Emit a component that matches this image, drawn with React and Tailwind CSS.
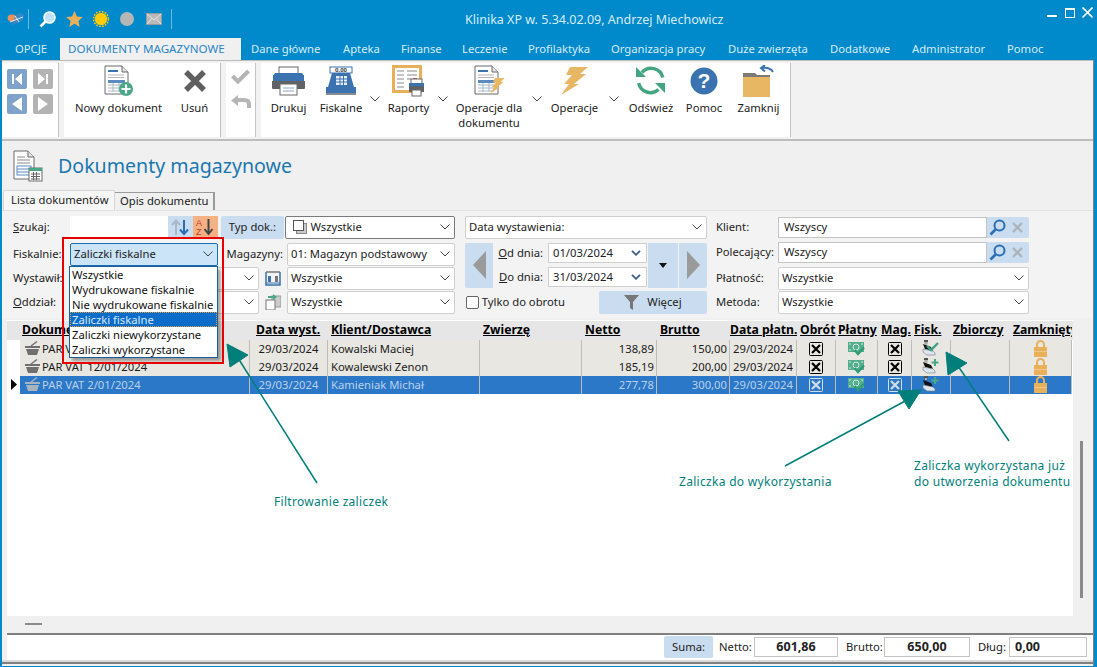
import React from 'react'

const GRID = 'grid grid-cols-[13px_230px_78px_152px_102px_75px_73px_67px_39px_42px_34px_39px_59px_62px]'

function Chevron({ className = '' }) {
  return (
    <svg width="10" height="6" viewBox="0 0 10 6" className={className}>
      <polyline points="0.5,0.5 5,5 9.5,0.5" fill="none" stroke="#444" strokeWidth="1" />
    </svg>
  )
}

function DateChevron() {
  return (
    <svg width="10" height="6" viewBox="0 0 10 6">
      <polyline points="1,0.8 5,4.8 9,0.8" fill="none" stroke="#3b5f8a" strokeWidth="1.8" />
    </svg>
  )
}

function Select({ value, width = 'flex-1', border = 'border-[#cfcfcf]', bg = 'bg-white' }) {
  return (
    <div className={`${width} ${border} ${bg} h-full border rounded-[2px] flex items-center pl-[3px] pr-[4px] justify-between overflow-hidden whitespace-nowrap`}>
      <span className="flex items-center gap-[3px]">{value}</span>
      <Chevron />
    </div>
  )
}

function TitleIcons() {
  return (
    <div className="flex items-center h-[38px] pl-[7px]">
      <svg width="18" height="14" viewBox="0 0 18 14">
        <ellipse cx="5" cy="6" rx="4.5" ry="3.5" fill="#e8935a" />
        <path d="M5 13 L8 4 L13 1 L17 3 L16 8 L11 11 Z" fill="#4a86c4" opacity="0.8" />
        <path d="M3 10 L16 5 M8 4 L12 10" stroke="#fff" strokeWidth="0.8" />
      </svg>
      <div className="w-px h-[20px] bg-[#6fb6dc] ml-[3px] mr-[10px]" />
      <svg width="17" height="17" viewBox="0 0 17 17">
        <circle cx="10.5" cy="6.5" r="5.5" fill="#bfe3fb" stroke="#fff" strokeWidth="1.6" />
        <line x1="6.5" y1="10.5" x2="1.5" y2="15.5" stroke="#fff" strokeWidth="2.6" />
      </svg>
      <svg width="17" height="16" viewBox="0 0 24 23" className="ml-[10px]">
        <polygon points="12,0 15.5,8 24,8.8 17.6,14.4 19.5,23 12,18.5 4.5,23 6.4,14.4 0,8.8 8.5,8" fill="#e8b05a" />
      </svg>
      <svg width="16" height="16" viewBox="0 0 16 16" className="ml-[10px]">
        <circle cx="8" cy="8" r="6.2" fill="#ffcb05" />
        <circle cx="8" cy="8" r="7.5" fill="none" stroke="#ffcb05" strokeWidth="1.6" strokeDasharray="1.6 1.4" />
      </svg>
      <div className="w-[14px] h-[14px] rounded-full bg-[#b6b6b6] ml-[11px]" />
      <svg width="16" height="12" viewBox="0 0 16 12" className="ml-[12px]">
        <rect x="0.5" y="0.5" width="15" height="11" fill="#b9b9b9" stroke="#9a9a9a" />
        <path d="M1 1 L8 7 L15 1 M1 11 L6 5.5 M15 11 L10 5.5" fill="none" stroke="#e4e4e4" strokeWidth="1" />
      </svg>
      <div className="w-px h-[20px] bg-[#6fb6dc] ml-[9px]" />
    </div>
  )
}

function WindowButtons() {
  return (
    <svg width="46" height="12" viewBox="0 0 46 12" className="absolute left-[1047px] top-[7px]">
      <rect x="0" y="8" width="10" height="2" fill="#fff" />
      <rect x="18.5" y="1.5" width="9" height="9" fill="none" stroke="#fff" strokeWidth="1" />
      <rect x="18" y="1" width="10" height="2" fill="#fff" />
      <path d="M35.5 0.5 L45.5 10.5 M45.5 0.5 L35.5 10.5" stroke="#fff" strokeWidth="1.7" />
    </svg>
  )
}

function MenuTabs() {
  const items = [
    ['Dane główne', 'w-[70px] ml-[10px]'],
    ['Apteka', 'w-[37px] ml-[22px]'],
    ['Finanse', 'w-[40px] ml-[21px]'],
    ['Leczenie', 'w-[45px] ml-[21px]'],
    ['Profilaktyka', 'w-[62px] ml-[21px]'],
    ['Organizacja pracy', 'w-[94px] ml-[21px]'],
    ['Duże zwierzęta', 'w-[77px] ml-[23px]'],
    ['Dodatkowe', 'w-[60px] ml-[25px]'],
    ['Administrator', 'w-[72px] ml-[22px]'],
    ['Pomoc', 'w-[37px] ml-[23px]'],
  ]
  return (
    <div className="flex items-end h-[22px] text-[#d6edf9] whitespace-nowrap">
      <div className="w-[60px] pl-[15px] h-full flex items-center">OPCJE</div>
      <div className="w-[181px] h-full bg-[#f0f0f0] text-[#2a86c8] text-[11.6px] flex items-center pl-[8px]">DOKUMENTY MAGAZYNOWE</div>
      {items.map(([t, m]) => (
        <div key={t} className={`${m} h-full flex items-center`}>{t}</div>
      ))}
    </div>
  )
}

function RibbonBtn({ width, icon, label }) {
  return (
    <div className={`${width} flex flex-col items-center shrink-0 whitespace-nowrap text-center leading-[15px] text-[#1b1b1b]`}>
      <div className="h-[37px] flex items-center justify-center">{icon}</div>
      <div>{label}</div>
    </div>
  )
}

function RibbonChev({ width }) {
  return (
    <div className={`${width} shrink-0 flex justify-center pt-[33px]`}>
      <Chevron />
    </div>
  )
}

function DocBase({ children }) {
  return (
    <svg width="30" height="32" viewBox="0 0 30 32">
      <path d="M1 1 H18 L24 7 V29 H1 Z" fill="#fff" stroke="#6a6a6a" strokeWidth="1" />
      <path d="M18 1 V7 H24" fill="#e4e4e4" stroke="#6a6a6a" strokeWidth="1" />
      <rect x="4" y="5" width="10" height="2" fill="#3b72b0" />
      <path d="M4 10 H20 M4 12.5 H20" stroke="#b5b5b5" strokeWidth="1" />
      <rect x="4" y="15" width="17" height="3" fill="#5b8bc0" />
      <path d="M4 20 H20 M4 23 H20 M4 26 H20 M9 18 V27 M15 18 V27" stroke="#aab8c8" strokeWidth="1" />
      {children}
    </svg>
  )
}

function Ribbon() {
  const printer = (
    <svg width="33" height="30" viewBox="0 0 33 30">
      <rect x="7" y="1" width="19" height="8" fill="#fff" stroke="#666" />
      <path d="M3 7 H30 L32 10 H1 Z" fill="#3b72b0" />
      <rect x="1" y="9" width="31" height="11" fill="#3b72b0" />
      <path d="M0 15 H33 V22 Q33 23 32 23 H1 Q0 23 0 22 Z" fill="#5f6368" />
      <rect x="8" y="18" width="17" height="11" fill="#fff" stroke="#666" />
      <path d="M11 22 H22 M11 25 H22" stroke="#8aa8c8" />
    </svg>
  )
  const register = (
    <svg width="30" height="30" viewBox="0 0 30 30">
      <rect x="4" y="1" width="22" height="6" fill="#fff" stroke="#3b72b0" />
      <text x="15" y="6.2" textAnchor="middle" fontSize="6" fontWeight="700" fill="#444">0,00</text>
      <path d="M6 7 H24 L28 21 H2 Z" fill="#3b72b0" />
      <rect x="10" y="10" width="11" height="9" fill="#e9eef5" />
      <path d="M10 13 H21 M10 16 H21 M14 10 V19 M17.5 10 V19" stroke="#3b72b0" />
      <rect x="0" y="21" width="30" height="6" fill="#3b72b0" />
      <rect x="0" y="27" width="30" height="2" fill="#8b8b8b" />
    </svg>
  )
  const reports = (
    <svg width="33" height="33" viewBox="0 0 33 33">
      <rect x="1.5" y="1.5" width="27" height="25" fill="#fff" stroke="#e8b05a" strokeWidth="3" />
      <path d="M5 6 H12 M15 6 H25 M5 10 H12 M15 10 H25 M5 14 H12 M15 14 H19 M5 18 H12 M5 22 H12" stroke="#8a8a8a" />
      <rect x="21" y="13" width="4" height="2" fill="#d9534f" />
      <rect x="17" y="18" width="15" height="9" fill="#5f6368" />
      <rect x="19" y="14" width="11" height="5" fill="#fff" stroke="#666" />
      <rect x="17" y="18" width="15" height="3" fill="#3b72b0" />
      <rect x="20" y="25" width="9" height="6" fill="#fff" stroke="#666" />
    </svg>
  )
  const bolt = (w, h) => (
    <svg width={w} height={h} viewBox="0 0 27 28">
      <path d="M9 0 H27 L19 7 H25 L13 17 H18 L0 28 L8 17 H3 L11 8 H5 Z" fill="#e8b764" />
    </svg>
  )
  const refresh = (
    <svg width="32" height="32" viewBox="0 0 32 32">
      <path d="M7 7.5 A12 12 0 0 1 27.8 12.5" fill="none" stroke="#45a582" strokeWidth="3.5" />
      <path d="M3.7 18 A12 12 0 0 0 23.5 24.5" fill="none" stroke="#45a582" strokeWidth="3.5" />
      <polygon points="1,2 1,12 11,12" fill="#45a582" />
      <polygon points="30,28 30,18 20,18" fill="#45a582" />
    </svg>
  )
  const help = (
    <svg width="28" height="28" viewBox="0 0 28 28">
      <circle cx="14" cy="14" r="13.5" fill="#3b72b0" />
      <text x="14" y="21" textAnchor="middle" fontSize="21" fontWeight="700" fill="#fff" fontFamily="Liberation Sans">?</text>
    </svg>
  )
  const folder = (
    <svg width="31" height="32" viewBox="0 0 31 32">
      <path d="M0 8 H12 L14 10 H27 V12 H0 Z" fill="#7a7a7a" />
      <rect x="0" y="12" width="27" height="20" fill="#e8b764" />
      <path d="M30 7 Q27 2 19 3 M22 0 L18 3 L22 6.5" fill="none" stroke="#3b72b0" strokeWidth="2" />
    </svg>
  )

  return (
    <div className="h-[81px] border-t border-b-2 border-[#bdbdbd] bg-[#f2f2f2] pt-[2px] pb-[2px] flex shrink-0">
      <div className="w-[57px] bg-white border-r border-[#c4c4c4] grid grid-cols-[20px_20px] grid-rows-[20px_20px] gap-x-[6px] gap-y-[5px] pl-[5px] pt-[6px] content-start">
        <div className="bg-[#7ea2c9] flex items-center justify-center rounded-[2px]">
          <svg width="12" height="12" viewBox="0 0 12 12"><path d="M1 1 H3 V11 H1 Z M11 0 V12 L4 6 Z" fill="#fff" /></svg>
        </div>
        <div className="bg-[#b3b3b3] flex items-center justify-center rounded-[2px]">
          <svg width="12" height="12" viewBox="0 0 12 12"><path d="M9 1 H11 V11 H9 Z M1 0 V12 L8 6 Z" fill="#fff" /></svg>
        </div>
        <div className="bg-[#7ea2c9] flex items-center justify-center rounded-[2px]">
          <svg width="12" height="14" viewBox="0 0 12 14"><path d="M11 0 V14 L1 7 Z" fill="#fff" /></svg>
        </div>
        <div className="bg-[#b3b3b3] flex items-center justify-center rounded-[2px]">
          <svg width="12" height="14" viewBox="0 0 12 14"><path d="M1 0 V14 L11 7 Z" fill="#fff" /></svg>
        </div>
      </div>
      <div className="w-[157px] ml-[5px] bg-white border-r border-[#c4c4c4] flex pl-[10px]">
        <RibbonBtn
          width="w-[89px]"
          icon={
            <DocBase>
              <circle cx="22" cy="24" r="7" fill="#4aa886" />
              <path d="M22 19.5 V28.5 M17.5 24 H26.5" stroke="#fff" strokeWidth="2.2" />
            </DocBase>
          }
          label="Nowy dokument"
        />
        <RibbonBtn
          width="w-[27px] ml-[18px]"
          icon={
            <svg width="22" height="22" viewBox="0 0 22 22">
              <path d="M2 2 L20 20 M20 2 L2 20" stroke="#5f5f5f" strokeWidth="5.4" />
            </svg>
          }
          label="Usuń"
        />
      </div>
      <div className="w-[30px] ml-[5px] bg-white border-r border-[#c4c4c4] flex flex-col items-center pt-[6px] gap-[11px]">
        <svg width="19" height="15" viewBox="0 0 19 15">
          <path d="M1.5 7 L7 12.5 L17.5 2" fill="none" stroke="#b5b5b5" strokeWidth="4" />
        </svg>
        <svg width="20" height="14" viewBox="0 0 20 14">
          <path d="M18 13 V9 Q18 5 13 5 H5" fill="none" stroke="#b5b5b5" strokeWidth="4" />
          <polygon points="7,0 7,11 0,5.5" fill="#b5b5b5" />
        </svg>
      </div>
      <div className="w-[530px] ml-[5px] bg-white border-r border-[#c4c4c4] flex pl-[10px]">
        <RibbonBtn width="w-[35px]" icon={printer} label="Drukuj" />
        <RibbonBtn width="w-[42px] ml-[14px]" icon={register} label="Fiskalne" />
        <RibbonChev width="w-[26px]" />
        <RibbonBtn width="w-[41px]" icon={reports} label="Raporty" />
        <RibbonChev width="w-[27px]" />
        <RibbonBtn
          width="w-[66px]"
          icon={
            <DocBase>
              <g transform="translate(16,13) scale(0.55)">
                <path d="M9 0 H27 L19 7 H25 L13 17 H18 L0 28 L8 17 H3 L11 8 H5 Z" fill="#e8b764" />
              </g>
            </DocBase>
          }
          label={<>Operacje dla<br />dokumentu</>}
        />
        <RibbonChev width="w-[29px]" />
        <RibbonBtn width="w-[47px]" icon={bolt(27, 28)} label="Operacje" />
        <RibbonChev width="w-[31px]" />
        <RibbonBtn width="w-[44px]" icon={refresh} label="Odśwież" />
        <RibbonBtn width="w-[38px] ml-[12px]" icon={help} label="Pomoc" />
        <RibbonBtn width="w-[43px] ml-[14px]" icon={folder} label="Zamknij" />
      </div>
    </div>
  )
}

function TitleSection() {
  return (
    <div className="h-[49px] shrink-0 flex items-center pl-[11px] pt-[2px]">
      <svg width="30" height="32" viewBox="0 0 30 32">
        <path d="M1 1 H15 L21 7 V29 H1 Z" fill="#fff" stroke="#6a6a6a" />
        <path d="M15 1 V7 H21" fill="#e4e4e4" stroke="#6a6a6a" />
        <path d="M4 7 H12 M4 10 H17 M4 13 H17" stroke="#8a8a8a" />
        <rect x="4" y="16" width="14" height="9" fill="#fff" stroke="#5b8bc0" />
        <path d="M4 19 H18 M4 22 H18" stroke="#5b8bc0" />
        <rect x="16" y="18" width="13" height="13" fill="#fff" stroke="#6a6a6a" />
        <rect x="16" y="18" width="13" height="3" fill="#4aa886" />
        <path d="M18 24 H27 M18 26.5 H27 M18 29 H27 M20.5 22 V30 M23.5 22 V30" stroke="#666" />
      </svg>
      <div className="ml-[15px] text-[19.6px] leading-[26px] text-[#1b78b0] whitespace-nowrap">Dokumenty magazynowe</div>
    </div>
  )
}

function PageTabs() {
  return (
    <div className="h-[20px] shrink-0 flex items-end pl-[1px] whitespace-nowrap">
      <div className="w-[112px] h-[20px] bg-[#f7f7f7] border-t border-x border-[#d5d5d5] flex items-center pl-[7px] rounded-t-[2px]">Lista dokumentów</div>
      <div className="w-[100px] h-[18px] bg-[#f0f0f0] border-t border-r-2 border-[#9a9a9a] flex items-center pl-[5px]">Opis dokumentu</div>
    </div>
  )
}

function Filters() {
  const copyIcon = (
    <svg width="14" height="14" viewBox="0 0 14 14" className="ml-[4px]">
      <rect x="3.5" y="3.5" width="10" height="10" fill="#c9c9c9" stroke="#8a8a8a" />
      <rect x="0.5" y="0.5" width="10" height="10" fill="#fff" stroke="#555" />
    </svg>
  )
  return (
    <div className="h-[108px] shrink-0 bg-[#f3f3f3] border-t border-[#e2e2e2] pt-[5px] pl-[12px] flex">
      {/* lewa kolumna */}
      <div className="w-[441px] flex flex-col">
        <div className="h-[23px] mb-[4px] flex items-center">
          <div className="w-[57px] -ml-px"><u>S</u>zukaj:</div>
          <div className="w-[98px] h-full bg-white" />
          <div className="w-[25px] h-full bg-[#c9dcf0] flex items-center justify-center">
            <svg width="18" height="17" viewBox="0 0 18 17">
              <path d="M5 16 V3 M1 6 L5 1.5 L9 6" fill="none" stroke="#a8b8c8" strokeWidth="2" />
              <path d="M13 1 V14 M9 10.5 L13 15 L17 10.5" fill="none" stroke="#2a6fb5" strokeWidth="2" />
            </svg>
          </div>
          <div className="w-[25px] h-full bg-[#f4b183] flex items-center justify-center">
            <svg width="18" height="18" viewBox="0 0 18 18">
              <text x="0" y="8" fontSize="9" fill="#c0392b" fontFamily="Liberation Sans">A</text>
              <text x="0" y="17" fontSize="9" fill="#c0392b" fontFamily="Liberation Sans">Z</text>
              <path d="M12.5 1 V15 M8.5 11 L12.5 16 L16.5 11" fill="none" stroke="#444" strokeWidth="2" />
            </svg>
          </div>
          <div className="w-[64px] h-full ml-[3px] bg-[#c9dcf0] rounded-[2px] flex items-center justify-center text-[#222]">Typ dok.:</div>
          <div className="w-[170px] h-full ml-px">
            <Select width="w-full" border="border-[#7a7a7a]" value={<>{copyIcon}Wszystkie</>} />
          </div>
        </div>
        <div className="h-[23px] mb-px flex items-center">
          <div className="w-[57px] -ml-px">Fiskalnie:</div>
          <Select width="w-[148px]" border="border-[#1a6fb5]" bg="bg-[#cbe4f7]" value="Zaliczki fiskalne" />
          <div className="w-[65px] text-right whitespace-nowrap">Magazyny:</div>
          <div className="w-[168px] h-full ml-[4px]">
            <Select width="w-full" value="01: Magazyn podstawowy" />
          </div>
        </div>
        <div className="h-[23px] mb-px flex items-center">
          <div className="w-[57px] -ml-px whitespace-nowrap">Wystawił:</div>
          <Select width="w-[189px]" value="" />
          <div className="w-[28px] flex justify-center">
            <svg width="16" height="15" viewBox="0 0 16 15">
              <path d="M1 1 V14 H15 V1" fill="none" stroke="#3b72b0" strokeWidth="1.5" />
              <path d="M1 1 H15" stroke="#777" strokeWidth="1.5" />
              <rect x="3" y="5" width="3" height="6" fill="#3b72b0" />
              <rect x="10" y="5" width="3" height="6" fill="#777" />
              <path d="M1 12 H15" stroke="#3b72b0" />
            </svg>
          </div>
          <div className="w-[168px] h-full">
            <Select width="w-full" value="Wszystkie" />
          </div>
        </div>
        <div className="h-[23px] flex items-center">
          <div className="w-[57px] -ml-px"><u>O</u>ddział:</div>
          <Select width="w-[189px]" value="" />
          <div className="w-[28px] flex justify-center">
            <svg width="16" height="16" viewBox="0 0 16 16">
              <rect x="7" y="2" width="9" height="11" fill="#ccc" stroke="#999" />
              <rect x="1" y="6" width="9" height="10" fill="#fff" stroke="#777" />
              <path d="M3 2 H8 V0 L12 3 L8 6 V4 H3 Z" fill="#4aa886" />
            </svg>
          </div>
          <div className="w-[168px] h-full">
            <Select width="w-full" value="Wszystkie" />
          </div>
        </div>
      </div>

      {/* daty */}
      <div className="w-[242px] ml-[10px] flex flex-col">
        <div className="h-[23px] mb-[4px]">
          <Select width="w-full" value="Data wystawienia:" />
        </div>
        <div className="h-[45px] mb-[3px] flex">
          <div className="w-[28px] bg-[#c9dcf0] rounded-l-[2px] flex items-center justify-center">
            <svg width="13" height="28" viewBox="0 0 13 28"><polygon points="13,0 13,28 0,14" fill="#9a9a9a" /></svg>
          </div>
          <div className="flex-1 flex flex-col gap-[4px]">
            <div className="h-[20px] flex items-center">
              <div className="w-[55px] text-right pr-[5px] whitespace-nowrap"><u>O</u>d dnia:</div>
              <div className="w-[99px] h-full bg-white border border-[#cfcfcf] flex items-center justify-between pl-[4px] pr-[5px]">
                01/03/2024
                <DateChevron />
              </div>
            </div>
            <div className="h-[20px] flex items-center">
              <div className="w-[55px] text-right pr-[5px] whitespace-nowrap"><u>D</u>o dnia:</div>
              <div className="w-[99px] h-full bg-white border border-[#cfcfcf] flex items-center justify-between pl-[4px] pr-[5px]">
                31/03/2024
                <DateChevron />
              </div>
            </div>
          </div>
          <div className="w-[30px] bg-[#c9dcf0] flex items-center justify-center">
            <svg width="8" height="5" viewBox="0 0 8 5"><polygon points="0,0 8,0 4,5" fill="#111" /></svg>
          </div>
          <div className="w-[28px] ml-px bg-[#c9dcf0] rounded-r-[2px] flex items-center justify-center">
            <svg width="13" height="28" viewBox="0 0 13 28"><polygon points="0,0 0,28 13,14" fill="#9a9a9a" /></svg>
          </div>
        </div>
        <div className="h-[23px] flex items-center">
          <div className="w-[13px] h-[13px] ml-px border border-[#666] rounded-[2px] bg-white" />
          <div className="ml-[3px] w-[119px] whitespace-nowrap">Tylko do obrotu</div>
          <div className="w-[110px] h-full rounded-[2px] bg-[#c9dcf0] flex items-center justify-center gap-[8px]">
            <svg width="15" height="15" viewBox="0 0 15 15">
              <path d="M0 0 H15 L9 7 V15 L6 13 V7 Z" fill="#777" />
            </svg>
            Więcej
          </div>
        </div>
      </div>

      {/* klient */}
      <div className="w-[313px] ml-[9px] flex flex-col">
        <div className="h-[21px] mt-px mb-[4px] flex items-center">
          <div className="w-[62px]">Klient:</div>
          <div className="w-[209px] h-full bg-white border border-[#c4c4c4] flex items-center pl-[5px]">Wszyscy</div>
          <SearchBtns />
        </div>
        <div className="h-[21px] mb-[4px] flex items-center">
          <div className="w-[62px] whitespace-nowrap">Polecający:</div>
          <div className="w-[209px] h-full bg-white border border-[#c4c4c4] flex items-center pl-[5px]">Wszyscy</div>
          <SearchBtns />
        </div>
        <div className="h-[23px] mb-px flex items-center">
          <div className="w-[62px]">Płatność:</div>
          <Select width="w-[251px]" value="Wszystkie" />
        </div>
        <div className="h-[23px] flex items-center">
          <div className="w-[62px]">Metoda:</div>
          <Select width="w-[251px]" value="Wszystkie" />
        </div>
      </div>
    </div>
  )
}

function SearchBtns() {
  return (
    <div className="w-[42px] h-full bg-[#c9dcf0] rounded-r-[2px] flex items-center pl-[2px] gap-[6px]">
      <svg width="17" height="17" viewBox="0 0 17 17">
        <circle cx="10.5" cy="6.5" r="5" fill="none" stroke="#2a6fb5" strokeWidth="2" />
        <line x1="6.5" y1="10.5" x2="1.5" y2="15.5" stroke="#2a6fb5" strokeWidth="2.6" />
      </svg>
      <svg width="11" height="11" viewBox="0 0 11 11">
        <path d="M1 1 L10 10 M10 1 L1 10" stroke="#aeb4ba" strokeWidth="2.4" />
      </svg>
    </div>
  )
}

function XBox({ dim }) {
  const c = dim ? '#d5dde8' : '#000'
  return (
    <svg width="14" height="14" viewBox="0 0 14 14">
      <rect x="0.5" y="0.5" width="13" height="13" rx="1" fill="none" stroke={c} />
      <path d="M3 3 L11 11 M11 3 L3 11" stroke={c} strokeWidth="2.2" />
    </svg>
  )
}

function Money() {
  return (
    <svg width="17" height="15" viewBox="0 0 17 15">
      <rect x="0" y="1" width="16" height="10" fill="#52ae8c" />
      <circle cx="8" cy="6" r="3" fill="none" stroke="#d5ece2" />
      <path d="M1 3 H3 M13 3 H15 M1 9 H3" stroke="#d5ece2" />
      <path d="M6.5 9 L10 13 L16 6.5" fill="none" stroke="#2e9a78" strokeWidth="2.2" />
    </svg>
  )
}

function FiskIcon({ mark }) {
  return (
    <svg width="18" height="17" viewBox="0 0 18 17">
      <rect x="2" y="0" width="4" height="2" fill="#555" />
      <path d="M1 4 L9 7 L11 11 L3 9 Z" fill="#111" />
      <rect x="3" y="2" width="2" height="2" fill="#fff" stroke="#444" strokeWidth="0.5" />
      <path d="M1 9 L11 11 L13 13 V15 L5 15 L1 12 Z" fill="#dbe6f3" stroke="#777" strokeWidth="0.6" />
      {mark === 'check' && <path d="M5 6 L9 10 L16 3" fill="none" stroke="#3fa283" strokeWidth="2.4" />}
      {mark === 'plus' && <path d="M13 1 V8 M9.5 4.5 H16.5" stroke="#4aa886" strokeWidth="2" />}
    </svg>
  )
}

function Lock() {
  return (
    <svg width="13" height="17" viewBox="0 0 13 17">
      <path d="M3 8 V4.5 A3.5 3.5 0 0 1 10 4.5 V8" fill="none" stroke="#e8b05a" strokeWidth="2" />
      <rect x="0" y="7" width="13" height="10" fill="#e8b05a" />
      <path d="M0 11.5 H13" stroke="#f0cd94" strokeWidth="0.8" />
    </svg>
  )
}

function Basket({ dim }) {
  const c = dim ? '#aab4bf' : '#6f6f6f'
  return (
    <svg width="15" height="15" viewBox="0 0 15 15">
      <path d="M6 5 L12 0.5" stroke={c} strokeWidth="1.4" />
      <rect x="0" y="5" width="15" height="2" fill={c} />
      <path d="M1 8 H14 L12 14 H3 Z" fill={c} />
    </svg>
  )
}

const rows = [
  { doc: 'PAR VAT 13/01/2024', date: '29/03/2024', client: 'Kowalski Maciej', net: '138,89', gross: '150,00', mark: 'check' },
  { doc: 'PAR VAT 12/01/2024', date: '29/03/2024', client: 'Kowalewski Zenon', net: '185,19', gross: '200,00', mark: 'plus' },
  { doc: 'PAR VAT 2/01/2024', date: '29/03/2024', client: 'Kamieniak Michał', net: '277,78', gross: '300,00', mark: 'plus', selected: true },
]

function GridTable() {
  const heads = [
    ['', 'pl-0'],
    ['Dokument', 'pl-[2px]'],
    ['Data wyst.', 'pl-[6px]'],
    ['Klient/Dostawca', 'pl-[3px]'],
    ['Zwierzę', 'pl-[3px]'],
    ['Netto', 'pl-[3px]'],
    ['Brutto', 'pl-[3px]'],
    ['Data płatn.', 'pl-0'],
    ['Obrót', 'pl-[3px]'],
    ['Płatny', 'pl-[2px]'],
    ['Mag.', 'pl-[3px]'],
    ['Fisk.', 'pl-[2px]'],
    ['Zbiorczy', 'pl-[2px]'],
    ['Zamknięty', 'pl-[3px]'],
  ]
  return (
    <div className="w-[1066px] h-full bg-white">
      <div className={`${GRID} h-[19px] bg-[#e6e6e6] font-bold text-black text-[12.2px] mt-px`}>
        {heads.map(([t, p], i) => (
          <div key={i} className={`${p} underline whitespace-nowrap overflow-hidden leading-[18px]`}>{t}</div>
        ))}
      </div>
      {rows.map((r) => {
        const sep = 'border-r border-[#bdbdbd] h-full flex items-center overflow-hidden whitespace-nowrap'
        return (
          <div key={r.doc} className={`${GRID} h-[18px]`}>
            <div className="bg-white flex items-center justify-center">
              {r.selected && (
                <svg width="6" height="11" viewBox="0 0 6 11"><polygon points="0,0 6,5.5 0,11" fill="#000" /></svg>
              )}
            </div>
            {[
              <div className="flex items-center gap-[2px] pl-[5px]"><Basket dim={r.selected} />{r.doc}</div>,
              <div className="w-full text-center">{r.date}</div>,
              <div className="pl-[3px]">{r.client}</div>,
              '',
              <div className="w-full text-right pr-[2px]">{r.net}</div>,
              <div className="w-full text-right pr-[2px]">{r.gross}</div>,
              <div className="w-full text-center">{r.date}</div>,
              <div className="w-full flex justify-center"><XBox dim={r.selected} /></div>,
              <div className="w-full flex justify-center"><Money /></div>,
              <div className="w-full flex justify-center"><XBox dim={r.selected} /></div>,
              <div className="w-full flex justify-center"><FiskIcon mark={r.mark} /></div>,
              '',
              <div className="w-full flex justify-center"><Lock /></div>,
            ].map((c, i) => (
              <div
                key={i}
                className={`${sep} ${r.selected ? 'bg-[#2b78c8] text-[#bcd0e8]' : 'bg-[#e9e7e2] text-[#1b1b1b]'}`}
              >
                {c}
              </div>
            ))}
          </div>
        )
      })}
    </div>
  )
}

function Footer() {
  const value = "font-['Liberation_Sans',sans-serif] text-[12.5px] font-bold"
  return (
    <div className="h-[31px] shrink-0 flex flex-col border-b-2 border-[#808080]">
      <div className="flex-1 ml-[5px] bg-white border-t-2 border-[#808080] flex items-center justify-end pr-[6px]">
        <div className="w-[49px] h-[22px] bg-[#c9dcf0] rounded-[2px] flex items-center justify-center">Suma:</div>
        <div className="w-[33px] ml-[6px]">Netto:</div>
        <div className={`w-[84px] h-[20px] ml-[2px] border border-[#c4c4c4] flex items-center justify-center ${value}`}>601,86</div>
        <div className="w-[36px] ml-[8px]">Brutto:</div>
        <div className={`w-[86px] h-[20px] ml-[2px] border border-[#c4c4c4] flex items-center justify-center ${value}`}>650,00</div>
        <div className="w-[27px] ml-[8px]">Dług:</div>
        <div className={`w-[78px] h-[20px] ml-[4px] border border-[#c4c4c4] flex items-center pl-[5px] ${value}`}>0,00</div>
      </div>
      <div className="h-[2px] bg-[#dadada]" />
    </div>
  )
}

function Annotations() {
  const note = "absolute text-[#007f7a] font-['Liberation_Sans',sans-serif] text-[12px] tracking-[0.3px] whitespace-nowrap"
  return (
    <>
      <svg width="1097" height="667" viewBox="0 0 1097 667" className="absolute left-0 top-0 pointer-events-none">
        <g fill="#007f7a" stroke="#007f7a">
          <polygon points="227,344 248,355 230,367" />
          <line x1="238" y1="358" x2="317" y2="483" strokeWidth="1.5" />
          <polygon points="921,390 898,391 909,409" />
          <line x1="907" y1="400" x2="785" y2="466" strokeWidth="1.5" />
          <polygon points="946,352 967,363 948,375" />
          <line x1="958" y1="366" x2="1009" y2="441" strokeWidth="1.5" />
        </g>
      </svg>
      <div className={`${note} left-[274px] top-[494px] leading-[15px]`}>Filtrowanie zaliczek</div>
      <div className={`${note} left-[679px] top-[474px] leading-[15px]`}>Zaliczka do wykorzystania</div>
      <div className={`${note} left-[914px] top-[458px] leading-[16px]`}>
        Zaliczka wykorzystana już<br />do utworzenia dokumentu
      </div>
    </>
  )
}

function FiscalDropdown() {
  const items = ['Wszystkie', 'Wydrukowane fiskalnie', 'Nie wydrukowane fiskalnie', 'Zaliczki fiskalne', 'Zaliczki niewykorzystane', 'Zaliczki wykorzystane']
  return (
    <>
      <div className="absolute left-[69px] top-[266px] w-[149px] h-[92px] bg-white border border-[#1a5f9a] shadow-[3px_3px_3px_rgba(0,0,0,0.35)] leading-[15px]">
        {items.map((t, i) => (
          <div
            key={t}
            className={`pl-[2px] h-[15px] whitespace-nowrap ${i === 3 ? 'bg-[#0c6cc9] text-[#d8e8f8] outline-1 outline-dotted outline-[#e0a040] -outline-offset-1' : 'text-[#111]'}`}
          >
            {t}
          </div>
        ))}
      </div>
      <div className="absolute left-[62px] top-[237px] w-[162px] h-[127px] border-2 border-[#e60000] pointer-events-none" />
    </>
  )
}

export default function App() {
  return (
    <div className="relative w-[1097px] h-[667px] overflow-hidden bg-[#0089cb] font-['Noto_Sans','Open_Sans',sans-serif] text-[11.25px] text-[#222] flex flex-col">
      <div className="h-[38px] shrink-0 relative flex text-[#d6edf9]">
        <TitleIcons />
        <div className="absolute left-[465px] top-[11px] text-[12.5px] leading-[17px] whitespace-nowrap">Klinika XP w. 5.34.02.09, Andrzej Miechowicz</div>
        <WindowButtons />
      </div>
      <MenuTabs />
      <div className="ml-[2px] mr-[3px] mb-[1px] h-[607px] bg-[#f0f0f0] flex flex-col border-r border-[#808080]">
        <Ribbon />
        <TitleSection />
        <PageTabs />
        <Filters />
        <div className="h-[2px] shrink-0" />
        <div className="h-[296px] shrink-0 flex ml-[5px]">
          <GridTable />
          <div className="w-[17px] pl-[7px] pt-[121px]">
            <div className="w-[3px] h-[157px] bg-[#8a8a8a]" />
          </div>
        </div>
        <div className="h-[17px] shrink-0 pl-[23px] pt-[7px]">
          <div className="w-[17px] h-[2px] bg-[#8a8a8a]" />
        </div>
        <Footer />
      </div>
      <FiscalDropdown />
      <Annotations />
    </div>
  )
}
